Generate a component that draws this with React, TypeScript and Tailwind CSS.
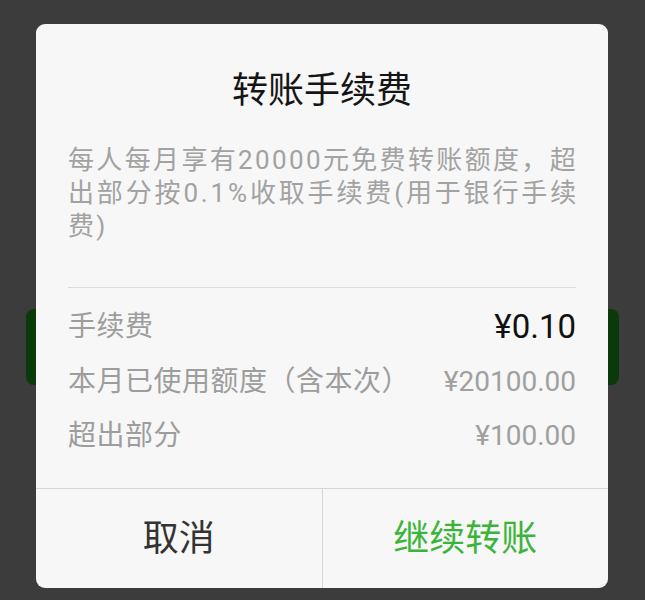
export default function App() {
  const font = { fontFamily: "Roboto, 'Noto Sans CJK SC', sans-serif" };
  return (
    <div className="relative h-[600px] w-[645px] overflow-hidden bg-[#3c3c3c]" style={font}>
      {/* dimmed page behind the modal */}
      <div className="flex flex-col px-[26px] pt-[309px]">
        <div className="h-[76px] w-[593px] rounded-[8px] bg-[#0a3a0a]" />
      </div>

      {/* modal dialog */}
      <div className="absolute left-[36px] top-[24px] flex h-[564px] w-[572px] flex-col rounded-[9px] bg-[#f7f7f7]">
        <div className="pt-[49px] text-center text-[36px] leading-[36px] text-[#151515]">
          转账手续费
        </div>

        <div className="mt-[35px] px-[32px] text-[26px] leading-[33px] text-[#a2a2a2] whitespace-nowrap">
          <div className="tracking-[2.35px]">每人每月享有20000元免费转账额度，超</div>
          <div className="tracking-[2.85px]">出部分按0.1%收取手续费(用于银行手续</div>
          <div className="tracking-[2.3px]">费)</div>
        </div>

        <div className="mx-[32px] mt-[44px] h-px bg-[#dcdcdc]" />

        <div className="flex flex-col px-[32px] pt-[12px]">
          <div className="flex h-[54px] items-center justify-between">
            <span className="text-[28px] tracking-[0.5px] text-[#9d9d9d]">手续费</span>
            <span className="text-[33px] text-[#111]">¥0.10</span>
          </div>
          <div className="flex h-[55px] items-center justify-between">
            <span className="text-[28px] tracking-[0.5px] text-[#9d9d9d]">本月已使用额度（含本次）</span>
            <span className="text-[28px] text-[#a0a0a0]">¥20100.00</span>
          </div>
          <div className="flex h-[54px] items-center justify-between">
            <span className="text-[28px] tracking-[0.5px] text-[#9d9d9d]">超出部分</span>
            <span className="text-[28px] text-[#a0a0a0]">¥100.00</span>
          </div>
        </div>

        <div className="mt-auto flex h-[100px] border-t border-[#d6d6d6]">
          <div className="flex flex-1 items-center justify-center border-r border-[#d6d6d6] text-[36px] text-[#333]">
            取消
          </div>
          <div className="flex flex-1 items-center justify-center text-[36px] text-[#3cb43a]">
            继续转账
          </div>
        </div>
      </div>
    </div>
  );
}
